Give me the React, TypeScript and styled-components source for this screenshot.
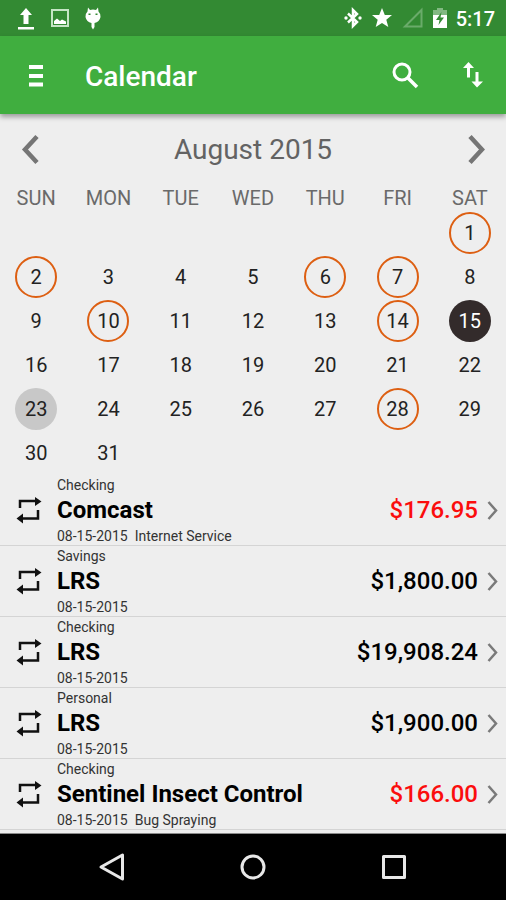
import React from "react";
import styled, { createGlobalStyle, css } from "styled-components";

const GlobalStyle = createGlobalStyle`
  *, *::before, *::after { box-sizing: border-box; }
  body {
    margin: 0;
    background: #eeeeee;
    font-family: Roboto, "Liberation Sans", sans-serif;
    color: #000;
  }
  button {
    border: 0;
    padding: 0;
    background: none;
    font: inherit;
    color: inherit;
    cursor: pointer;
  }
  svg { display: block; }
`;

const Screen = styled.div`
  display: flex;
  flex-direction: column;
  min-height: 100vh;
`;

const StatusBar = styled.div`
  display: flex;
  align-items: center;
  justify-content: space-between;
  height: 36px;
  padding: 0 11px 0 16px;
  background: #338a33;
  color: #fff;
`;

const StatusGroup = styled.div<{ $gap: number }>`
  display: flex;
  align-items: center;
  gap: ${({ $gap }) => $gap}px;
`;

const Clock = styled.time`
  padding-top: 2px;
  font-size: 20px;
  line-height: 24px;
  font-weight: 500;
`;

const AppBar = styled.header`
  display: flex;
  align-items: center;
  height: 78px;
  padding: 0 17px 0 20px;
  background: #40ae3f;
  color: #fff;
  box-shadow: 0 3px 5px rgba(0, 0, 0, 0.35);
  z-index: 1;
`;

const Title = styled.h1`
  flex: 1;
  margin: 0 0 0 33px;
  padding-top: 3px;
  font-size: 28px;
  line-height: 32px;
  font-weight: 500;
`;

const IconButton = styled.button`
  display: flex;
  align-items: center;
  justify-content: center;
  width: 32px;
  height: 48px;
`;

const Actions = styled.div`
  display: flex;
  gap: 36px;
`;

const MonthBar = styled.div`
  display: flex;
  align-items: center;
  justify-content: space-between;
  height: 71px;
  padding: 0 14px;
  color: #636363;
`;

const MonthName = styled.h2`
  margin: 0;
  font-size: 28px;
  line-height: 36px;
  font-weight: 400;
`;

const MonthTable = styled.table`
  width: 100%;
  table-layout: fixed;
  border-collapse: collapse;
  font-size: 20px;
  line-height: 26px;
  text-align: center;
`;

const Weekday = styled.th`
  height: 26px;
  padding: 0;
  font-weight: 400;
  color: #6a6a6a;
`;

const DayCell = styled.td`
  height: 44px;
  padding: 0;
`;

type DayState = "plain" | "marked" | "selected" | "today";

const DayButton = styled.button<{ $state: DayState }>`
  display: flex;
  align-items: center;
  justify-content: center;
  width: 42px;
  height: 42px;
  margin: 0 auto;
  border-radius: 50%;
  color: #222;
  ${({ $state }) => $state === "marked" && css`border: 2px solid #dd5f12;`}
  ${({ $state }) => $state === "today" && css`background: #c8c8c8;`}
  ${({ $state }) => $state === "selected" && css`background: #332b2b; color: #fff;`}
`;

const List = styled.ul`
  margin: 0;
  padding: 0 0 3px;
  list-style: none;
`;

const ListItem = styled.li`
  border-bottom: 1px solid #d4d4d4;
`;

const Row = styled.button`
  display: flex;
  align-items: center;
  width: 100%;
  padding: 1px 8px 0 16px;
  text-align: left;
`;

const Details = styled.span`
  display: flex;
  flex: 1;
  flex-direction: column;
  min-width: 0;
  margin-left: 15px;
`;

const Small = styled.span`
  display: flex;
  gap: 7px;
  font-size: 14px;
  line-height: 18px;
  color: #333;
`;

const Payee = styled.span`
  font-size: 24px;
  line-height: 33px;
  font-weight: 700;
`;

const Amount = styled.span<{ $expense: boolean }>`
  margin-right: 9px;
  font-size: 24px;
  line-height: 33px;
  font-weight: 500;
  color: ${({ $expense }) => ($expense ? "#fb0d0d" : "#000")};
`;

const NavBar = styled.nav`
  display: grid;
  grid-template-columns: repeat(3, 1fr);
  height: 67px;
  margin-top: auto;
  padding: 0 42px;
  border-top: 1px solid #8a8a8a;
  background: #000;
`;

const NavButton = styled.button`
  display: flex;
  align-items: center;
  justify-content: center;
`;

const UploadIcon = () => (
  <svg width="20" height="24" viewBox="0 0 20 24" fill="currentColor" aria-hidden="true">
    <path d="M10 2 16 9H12.500V18H7.500V9H4ZM2 21H18V23.500H2Z" />
  </svg>
);

const PictureIcon = () => (
  <svg width="20" height="20" viewBox="0 0 20 20" aria-hidden="true">
    <rect x="2" y="2" width="16" height="16" fill="none" stroke="#c5e5c5" strokeWidth="2" />
    <path d="M4 16V13L7 10.500 10 13 12 11.500 16 13.500V16Z" fill="#fff" />
  </svg>
);

const DroidIcon = () => (
  <svg width="18" height="24" viewBox="0 0 18 24" aria-hidden="true">
    <path
      d="M4 1.500 6 4Q9 3 12 4L14 1.500 14.500 5.500Q17 8 16.500 11 15.500 16 10.500 17V21L9 23.500 7.500 21V17Q2.500 16 1.500 11 1 8 3.500 5.500Z"
      fill="#fff"
    />
    <path d="M4.500 7.500H6.500V9H4.500ZM11.500 7.500H13.500V9H11.500Z" fill="#338a33" />
  </svg>
);

const BluetoothIcon = () => (
  <svg width="18" height="22" viewBox="0 0 18 22" aria-hidden="true">
    <path d="M4 6.500 13 15 9 19V3L13 7 4 15.500" fill="none" stroke="#fff" strokeWidth="2.500" />
    <circle cx="2" cy="11" r="1.700" fill="#fff" />
    <circle cx="16" cy="11" r="1.700" fill="#fff" />
  </svg>
);

const StarIcon = () => (
  <svg width="22" height="22" viewBox="0 0 22 22" fill="currentColor" aria-hidden="true">
    <path d="M11 1 13.800 8H21L15.300 12.700 17.300 20 11 16 4.700 20 6.700 12.700 1 8H8.200Z" />
  </svg>
);

const SignalIcon = () => (
  <svg width="22" height="22" viewBox="0 0 22 22" aria-hidden="true">
    <path d="M3 19.500H19.500V3Z" fill="none" stroke="#6aab6a" strokeWidth="2" />
  </svg>
);

const BatteryIcon = () => (
  <svg width="14" height="22" viewBox="0 0 14 22" aria-hidden="true">
    <path d="M4 1H10V3H14V8H0V3H4Z" fill="#82b982" />
    <path d="M0 8H14V21H0Z" fill="#fff" />
    <path d="M8.500 5 3 13H6.500L5.500 18 11 10.500H7.500Z" fill="#338a33" />
  </svg>
);

const MenuIcon = () => (
  <svg width="16" height="24" viewBox="0 0 16 24" fill="currentColor" aria-hidden="true">
    <path d="M1 2H15V6H1ZM1 11H15V15H1ZM1 19.500H15V23.500H1Z" />
  </svg>
);

const SearchIcon = () => (
  <svg width="28" height="28" viewBox="0 0 28 28" fill="none" stroke="currentColor" strokeWidth="3" aria-hidden="true">
    <circle cx="11" cy="11" r="8" />
    <path d="M17 17 26 26" strokeWidth="3.500" />
  </svg>
);

const SortIcon = () => (
  <svg width="22" height="28" viewBox="0 0 22 28" fill="currentColor" aria-hidden="true">
    <path d="M6.500 1 12 7H8V16.500H5V7H1ZM13.500 11H16.500V20.500H21L15 26.500 9.500 20.500H13.500Z" />
  </svg>
);

const ChevronIcon = ({ back = false }: { back?: boolean }) => (
  <svg width="18" height="32" viewBox="0 0 18 32" fill="none" stroke="#757575" strokeWidth="4.500" aria-hidden="true">
    <path d={back ? "M16 2.500 4 15.500 16 28.500" : "M3 2.500 15 15.500 3 28.500"} />
  </svg>
);

const RowChevron = () => (
  <svg width="11" height="20" viewBox="0 0 11 20" fill="none" stroke="#7a7a7a" strokeWidth="2.500" aria-hidden="true">
    <path d="M1.500 1 9 9.500 1.500 18" />
  </svg>
);

const RepeatIcon = () => (
  <svg width="26" height="28" viewBox="0 0 26 28" aria-hidden="true">
    <path d="M4 11V4H20M22 13V21.500H6" fill="none" stroke="#111" strokeWidth="2.500" />
    <path d="M19 0 25.500 4.500 19 9ZM7 16.500 .5 21.500 7 26.500Z" fill="#111" />
  </svg>
);

const weekdays = ["SUN", "MON", "TUE", "WED", "THU", "FRI", "SAT"];
const markedDays = new Set([1, 2, 6, 7, 10, 14, 28]);
const firstColumn = 6;
const daysInMonth = 31;

const weeks = Array.from({ length: 6 }, (_, week) =>
  weekdays.map((_, column) => {
    const day = week * 7 + column - firstColumn + 1;
    return day >= 1 && day <= daysInMonth ? day : null;
  })
);

const stateOf = (day: number): DayState => {
  if (day === 15) return "selected";
  if (day === 23) return "today";
  return markedDays.has(day) ? "marked" : "plain";
};

const transactions = [
  { account: "Checking", payee: "Comcast", note: "Internet Service", amount: "$176.95", expense: true },
  { account: "Savings", payee: "LRS", note: "", amount: "$1,800.00", expense: false },
  { account: "Checking", payee: "LRS", note: "", amount: "$19,908.24", expense: false },
  { account: "Personal", payee: "LRS", note: "", amount: "$1,900.00", expense: false },
  { account: "Checking", payee: "Sentinel Insect Control", note: "Bug Spraying", amount: "$166.00", expense: true },
];

export default function App() {
  return (
    <Screen>
      <GlobalStyle />
      <StatusBar>
        <StatusGroup $gap={14}>
          <UploadIcon />
          <PictureIcon />
          <DroidIcon />
        </StatusGroup>
        <StatusGroup $gap={9}>
          <BluetoothIcon />
          <StarIcon />
          <SignalIcon />
          <BatteryIcon />
          <Clock>5:17</Clock>
        </StatusGroup>
      </StatusBar>

      <AppBar>
        <IconButton aria-label="Menu"><MenuIcon /></IconButton>
        <Title>Calendar</Title>
        <Actions>
          <IconButton aria-label="Search"><SearchIcon /></IconButton>
          <IconButton aria-label="Sort"><SortIcon /></IconButton>
        </Actions>
      </AppBar>

      <main>
        <MonthBar>
          <IconButton aria-label="Previous month"><ChevronIcon back /></IconButton>
          <MonthName>August 2015</MonthName>
          <IconButton aria-label="Next month"><ChevronIcon /></IconButton>
        </MonthBar>
        <MonthTable>
          <thead>
            <tr>
              {weekdays.map((name) => (
                <Weekday key={name} scope="col">{name}</Weekday>
              ))}
            </tr>
          </thead>
          <tbody>
            {weeks.map((week, index) => (
              <tr key={index}>
                {week.map((day, column) => (
                  <DayCell key={column}>
                    {day !== null && <DayButton $state={stateOf(day)}>{day}</DayButton>}
                  </DayCell>
                ))}
              </tr>
            ))}
          </tbody>
        </MonthTable>
        <List>
          {transactions.map((item, index) => (
            <ListItem key={index}>
              <Row>
                <RepeatIcon />
                <Details>
                  <Small>{item.account}</Small>
                  <Payee>{item.payee}</Payee>
                  <Small>
                    <span>08-15-2015</span>
                    {item.note && <span>{item.note}</span>}
                  </Small>
                </Details>
                <Amount $expense={item.expense}>{item.amount}</Amount>
                <RowChevron />
              </Row>
            </ListItem>
          ))}
        </List>
      </main>

      <NavBar>
        <NavButton aria-label="Back">
          <svg width="28" height="30" viewBox="0 0 28 30" fill="none" stroke="#e8e8e8" strokeWidth="3" strokeLinejoin="round">
            <path d="M3 15 24.500 3V27Z" />
          </svg>
        </NavButton>
        <NavButton aria-label="Home">
          <svg width="28" height="28" viewBox="0 0 28 28" fill="none" stroke="#e8e8e8" strokeWidth="3">
            <circle cx="14" cy="14" r="11" />
          </svg>
        </NavButton>
        <NavButton aria-label="Recent apps">
          <svg width="28" height="28" viewBox="0 0 28 28" fill="none" stroke="#e8e8e8" strokeWidth="3" strokeLinejoin="round">
            <rect x="3.500" y="3.500" width="21" height="21" />
          </svg>
        </NavButton>
      </NavBar>
    </Screen>
  );
}
